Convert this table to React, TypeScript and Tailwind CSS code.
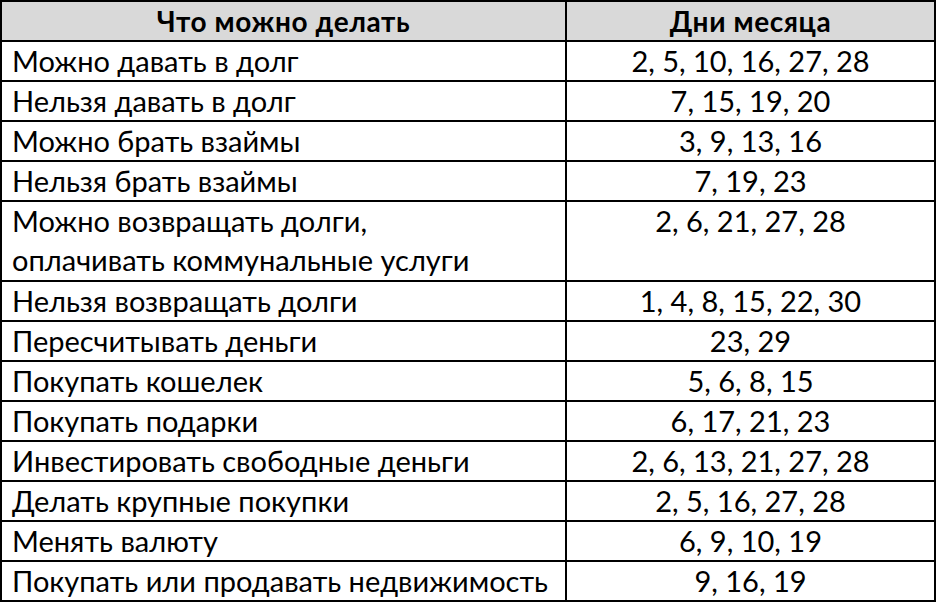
const rows: { what: string[]; days: string }[] = [
  { what: ['Можно давать в долг'], days: '2, 5, 10, 16, 27, 28' },
  { what: ['Нельзя давать в долг'], days: '7, 15, 19, 20' },
  { what: ['Можно брать взаймы'], days: '3, 9, 13, 16' },
  { what: ['Нельзя брать взаймы'], days: '7, 19, 23' },
  { what: ['Можно возвращать долги,', 'оплачивать коммунальные услуги'], days: '2, 6, 21, 27, 28' },
  { what: ['Нельзя возвращать долги'], days: '1, 4, 8, 15, 22, 30' },
  { what: ['Пересчитывать деньги'], days: '23, 29' },
  { what: ['Покупать кошелек'], days: '5, 6, 8, 15' },
  { what: ['Покупать подарки'], days: '6, 17, 21, 23' },
  { what: ['Инвестировать свободные деньги'], days: '2, 6, 13, 21, 27, 28' },
  { what: ['Делать крупные покупки'], days: '2, 5, 16, 27, 28' },
  { what: ['Менять валюту'], days: '6, 9, 10, 19' },
  { what: ['Покупать или продавать недвижимость'], days: '9, 16, 19' },
];

export default function App() {
  return (
    <div className="bg-white w-[937px] h-[603px] text-black" style={{ fontFamily: 'Lato, "Noto Sans", sans-serif' }}>
      <div className="w-[936px] border-2 border-black">
        {/* header */}
        <div className="grid grid-cols-[565px_1fr] bg-[#d9d9d9] border-b-2 border-black font-bold text-[28px] tracking-[0.6px] leading-[38px]">
          <div className="border-r-2 border-black text-center">Что можно делать</div>
          <div className="text-center">Дни месяца</div>
        </div>

        {rows.map((r, i) => (
          <div
            key={i}
            className={`grid grid-cols-[565px_1fr] text-[29px] ${i < rows.length - 1 ? 'border-b-2 border-black' : ''}`}
          >
            <div className="border-r-2 border-black pl-[10px]">
              {r.what.map((line, j) => (
                <div key={j} className={j === 0 ? 'leading-[38px]' : 'leading-[40px]'}>
                  {line}
                </div>
              ))}
            </div>
            <div className="text-center leading-[38px]">{r.days}</div>
          </div>
        ))}
      </div>
    </div>
  );
}
